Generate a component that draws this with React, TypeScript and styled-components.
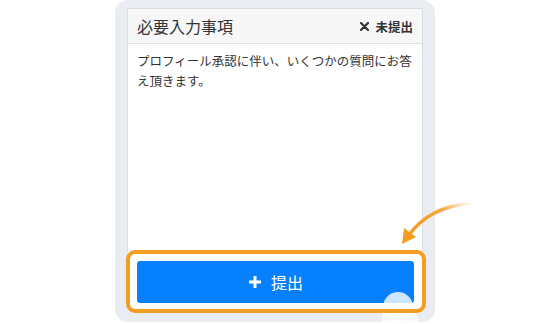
import React from "react";
import styled, { createGlobalStyle } from "styled-components";

const Global = createGlobalStyle`
  html, body { margin: 0; padding: 0; background: #ffffff; }
  body { font-family: "Noto Sans CJK JP", "Noto Sans", sans-serif; overflow: hidden; }
`;

const Stage = styled.div`
  position: relative;
  width: 550px;
  height: 324px;
  display: flex;
  justify-content: center;
  align-items: flex-start;
`;

const Panel = styled.div`
  width: 320px;
  height: 322px;
  box-sizing: border-box;
  background: #e9ecf1;
  border-radius: 13px;
  padding: 8px 12px 9px 12px;
  display: flex;
  flex-direction: column;
`;

const Card = styled.div`
  flex: 1;
  display: flex;
  flex-direction: column;
  background: #ffffff;
  border: 1px solid #d9dde3;
  border-bottom: none;
  border-radius: 3px 3px 0 0;
`;

const Header = styled.div`
  height: 34px;
  display: flex;
  align-items: center;
  justify-content: space-between;
  padding: 0 9px 0 9px;
  background: #f7f7f8;
  border-bottom: 1px solid #dfe2e6;
`;

const Title = styled.span`
  font-size: 16px;
  color: #333;
  letter-spacing: 0;
`;

const Status = styled.span`
  display: flex;
  align-items: center;
  gap: 6px;
  font-size: 12.5px;
  font-weight: 700;
  color: #333;
`;

const Body = styled.div`
  flex: 1;
  padding: 7px 9px;
  font-size: 12.5px;
  line-height: 20px;
  color: #333;
`;

const Highlight = styled.div`
  position: relative;
  margin: -3px -3px 0 -1px;
  height: 63px;
  box-sizing: border-box;
  padding: 11px 12px 10px 11px;
  background: #ffffff;
  border-radius: 9px;
  &::after {
    content: "";
    position: absolute;
    inset: 0;
    border: 4px solid #f39d22;
    border-radius: 9px;
    z-index: 3;
    pointer-events: none;
  }
`;

const Button = styled.button`
  width: 100%;
  height: 42px;
  border: none;
  border-radius: 3px;
  background: #0780fe;
  color: #ffffff;
  font-family: "Noto Sans CJK JP", "Noto Sans", sans-serif;
  font-size: 16px;
  display: flex;
  align-items: center;
  justify-content: center;
  gap: 9px;
  padding: 0;
`;

const Touch = styled.div`
  position: absolute;
  left: 257px;
  top: 42px;
  width: 30px;
  height: 30px;
  border-radius: 50%;
  background: rgba(255, 255, 255, 0.8);
  z-index: 2;
`;

const Pointer = styled.svg`
  position: absolute;
  left: 375px;
  top: 300px;
  z-index: 1;
`;

const Arrow = styled.svg`
  position: absolute;
  left: 395px;
  top: 195px;
  z-index: 5;
`;

export default function App() {
  return (
    <>
      <Global />
      <Stage>
        <Panel>
          <Card>
            <Header>
              <Title>必要入力事項</Title>
              <Status>
                <svg width="9" height="9" viewBox="0 0 9 9">
                  <path d="M1 1 L8 8 M8 1 L1 8" stroke="#333" strokeWidth="2.2" strokeLinecap="round" />
                </svg>
                未提出
              </Status>
            </Header>
            <Body>プロフィール承認に伴い、いくつかの質問にお答え頂きます。</Body>
          </Card>
          <Highlight>
            <Button>
              <svg width="14" height="14" viewBox="0 0 14 14">
                <path d="M7 1 V13 M1 7 H13" stroke="#fff" strokeWidth="3" />
              </svg>
              提出
            </Button>
            <Touch />
          </Highlight>
        </Panel>
        <Pointer width="50" height="24" viewBox="0 0 50 24">
          <path d="M7 8 Q22 24 37 8 L44 20 L40 24 L7 24 Z" fill="rgba(255,255,255,0.75)" />
        </Pointer>
        <Arrow width="80" height="55" viewBox="0 0 80 55">
          <defs>
            <linearGradient id="ag" x1="1" y1="0" x2="0" y2="1">
              <stop offset="0" stopColor="#f39d22" stopOpacity="0" />
              <stop offset="0.35" stopColor="#f39d22" stopOpacity="0.9" />
              <stop offset="1" stopColor="#f39d22" stopOpacity="1" />
            </linearGradient>
          </defs>
          <path d="M76 8 Q34 12 14 40" stroke="url(#ag)" strokeWidth="3.5" fill="none" strokeLinecap="round" />
          <path d="M7 49 L9 33 L21 42 Z" fill="#f39d22" />
        </Arrow>
      </Stage>
    </>
  );
}
